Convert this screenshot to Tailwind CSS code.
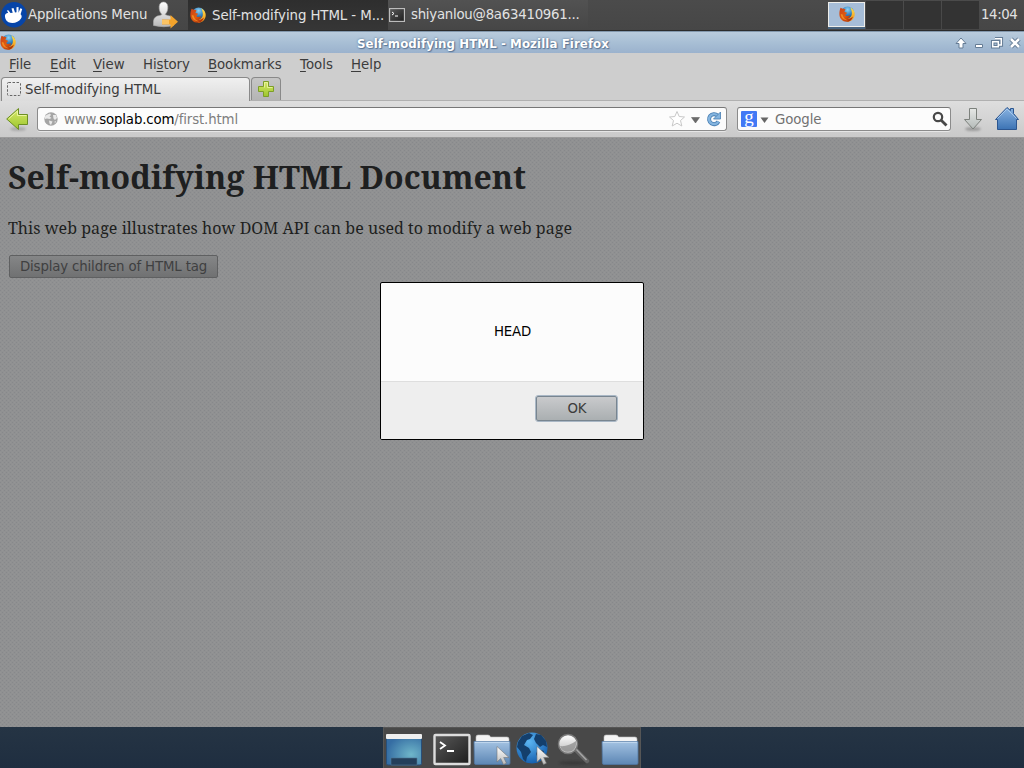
<!DOCTYPE html>
<html lang="en">
<head>
<meta charset="utf-8">
<title>Self-modifying HTML</title>
<script src="https://cdn.jsdelivr.net/npm/@tailwindcss/browser@4"></script>
</head>
<body class="w-[1024px] h-[768px] overflow-hidden flex flex-col bg-[#8f9091] font-['DejaVu_Sans',sans-serif] text-[13.33px] whitespace-nowrap text-[#3c3c3c]">
<svg class="absolute w-0 h-0">
  <defs>
    <linearGradient id="fo" x1="0" y1="0" x2="1" y2="1"><stop offset="0" stop-color="#c9421a"/><stop offset=".5" stop-color="#e05a10"/><stop offset="1" stop-color="#8e200c"/></linearGradient>
    <linearGradient id="fy" x1="0" y1="0" x2="0" y2="1"><stop offset="0" stop-color="#ffe34d"/><stop offset="1" stop-color="#f08a12"/></linearGradient>
    <radialGradient id="fb" cx=".5" cy=".25" r=".8"><stop offset="0" stop-color="#8fd4f5"/><stop offset=".5" stop-color="#2f7fc0"/><stop offset="1" stop-color="#0e2a63"/></radialGradient>
    <linearGradient id="gr" x1="0" y1="0" x2="0" y2="1"><stop offset="0" stop-color="#d8ea6a"/><stop offset="1" stop-color="#9cc52c"/></linearGradient>
    <linearGradient id="bl" x1="0" y1="0" x2="0" y2="1"><stop offset="0" stop-color="#8ab4e2"/><stop offset="1" stop-color="#3c73b4"/></linearGradient>
    <linearGradient id="fold" x1="0" y1="0" x2="0" y2="1"><stop offset="0" stop-color="#a3c2e2"/><stop offset="1" stop-color="#5c86b4"/></linearGradient>
    <linearGradient id="wh" x1="0" y1="0" x2="0" y2="1"><stop offset="0" stop-color="#ffffff"/><stop offset="1" stop-color="#b9b9b9"/></linearGradient>
    <linearGradient id="dn" x1="0" y1="0" x2="0" y2="1"><stop offset="0" stop-color="#e6e8e6"/><stop offset="1" stop-color="#b4bab8"/></linearGradient>
    <linearGradient id="dk" x1="0" y1="0" x2="1" y2="1"><stop offset="0" stop-color="#5a5a5a"/><stop offset="1" stop-color="#1d1d1d"/></linearGradient>
    <radialGradient id="desk" cx=".7" cy=".65" r=".7"><stop offset="0" stop-color="#6fb6c9"/><stop offset="1" stop-color="#356da3"/></radialGradient>
    <radialGradient id="glb" cx=".4" cy=".3" r=".7"><stop offset="0" stop-color="#5cb6f2"/><stop offset="1" stop-color="#1761b0"/></radialGradient>
    <symbol id="firefox" viewBox="0 0 16 16">
      <circle cx="8.600" cy="7" r="6.600" fill="url(#fb)"/>
      <path d="M11 1.200C15 3 16 6.500 15.700 9C15 13 12 15.800 8 15.800L8 12.500C11 12.500 13.200 10 12.800 6.500C12.600 4.200 12 2.500 11 1.200z" fill="url(#fy)"/>
      <path d="M1.500 1.800C2.300 2.300 3 2.600 3.800 2.700C5 2.600 6 3 6.500 3.700L5.300 5.600C6 6.500 7.200 6.300 8 6.800C7.800 7.900 6.500 8.100 6.300 9C7.300 10.600 9.600 9.800 11 9.300C10.600 11.500 9.500 12.300 8.500 12.500C10.500 13 12.500 12 14 10.500C13 14 10.500 15.900 7.500 15.800C3.500 15.600 .5 12.500 .4 8.500C.3 6 .7 4 1.500 1.800z" fill="url(#fo)"/>
      <path d="M1.800 8C2 12 5 14.500 9 14.300C6 13.500 4 11.500 3.600 8.600z" fill="#f08a22"/>
    </symbol>
    <symbol id="cursor" viewBox="0 0 14 20"><path d="M1 1V16.500L4.700 13L7.500 19L10.400 17.700L7.700 12H13z" fill="url(#wh)" stroke="#777" stroke-width=".6"/></symbol>
    <symbol id="folder" viewBox="0 0 38 32">
      <path d="M3 9V3Q3 1 5 1H15Q17 1 17.500 3H34Q36 3 36 5V12H3z" fill="#f4f4f4" stroke="#bdbdbd" stroke-width=".6"/>
      <path d="M1 7.500H37V29Q37 30.500 35.500 30.500H3Q1.500 30.500 1.400 29z" fill="url(#fold)" stroke="#4f76a2" stroke-width=".8"/>
      <path d="M2 8.300H36" stroke="#c6dbf0"/>
    </symbol>
    <pattern id="weave" width="4" height="4" patternUnits="userSpaceOnUse"><path d="M0 0h1v1H0zM2 2h1v1H2z" fill="#87888b"/><path d="M2 0h1v1H2zM0 2h1v1H0z" fill="#949495"/></pattern>
    <filter id="soft" x="-20%" y="-50%" width="140%" height="200%"><feGaussianBlur stdDeviation="1.2"/></filter>
  </defs>
</svg>

<!-- Desktop panel -->
<header class="h-[31px] shrink-0 flex bg-linear-to-b from-[#4b4b4b] to-[#464646] border-b border-[#2b2b2b] text-[#e2e2e2] leading-[29px]">
  <div class="w-[188px] flex">
    <svg class="w-[28px] h-[30px] shrink-0" viewBox="0 0 28 30"><circle cx="14" cy="14.700" r="12.800" fill="#0745a8"/><path d="M5 17C4.500 14.500 6 13 8.200 12.800L6.800 10.500L8.300 10.300L10.500 13L12.700 12.800L11.500 8.500L13.500 8L15 12.500L16.500 12.300V7.300L18.500 7L18.600 12.700L20.300 8.200L22.200 8.900L20.600 14.200C21.500 15 22.300 16.500 21 18.500C18.500 22.500 13 24 8.500 22.200C6.500 21.300 5.500 19.500 5 17z" fill="#fff"/></svg>
    <span class="w-[121px] tracking-[-0.18px]">Applications Menu</span>
    <svg class="ml-[3px] w-[28px] h-[30px]" viewBox="0 0 28 30"><path d="M1.500 25.500V21Q2 16 8 15.500L10 14.500C7.800 12.500 7 9.500 7.200 6.500C7.500 3.500 9 2 11.500 2S15.500 3.500 15.800 6.500C16 9.500 15.200 12.500 13 14.500L15.500 15.500Q21 16 21.500 21V25.500Q12 28 1.500 25.500z" fill="url(#wh)" stroke="#aaa" stroke-width=".6"/><path d="M10 19.500H18.500V15L26 21.800L18.500 28.500V24.500H10z" fill="#f3a32b"/><path d="M10 20H17V24H10z" fill="#ffd98a" opacity=".6"/></svg>
  </div>
  <div class="w-[200px] bg-linear-to-b from-[#2e2e2e] to-[#363636] flex">
    <svg class="ml-[2px] mt-[7px] w-4 h-4 shrink-0"><use href="#firefox"/></svg>
    <span class="ml-[6px] leading-[31px] tracking-[-0.08px]">Self-modifying HTML - M...</span>
  </div>
  <div class="w-[200px] bg-linear-to-b from-[#525252] to-[#464646] flex">
    <svg class="ml-px mt-[8px] w-4 h-[14px] shrink-0" viewBox="0 0 16 14"><rect x=".5" y=".5" width="15" height="13" fill="url(#dk)" stroke="#bcbcbc" stroke-width="1.300"/><path d="M3 4L5 5.500L3 7M6 8H9" stroke="#fff" fill="none"/></svg>
    <span class="ml-[6px] tracking-[-0.26px]">shiyanlou@8a63410961...</span>
  </div>
  <div class="ml-auto w-[196px] flex pt-px">
    <div class="w-[38px] h-[28px] bg-[#4a4a4a] pr-px"><div class="mt-px h-[27px] bg-[#49647f] pb-[2px]"><div class="h-[25px] border border-[#eeeeea] bg-[#a6bdd7] flex justify-center"><svg class="w-4 h-4 mt-[3px]"><use href="#firefox"/></svg></div></div></div>
    <div class="w-[37px] h-[28px] bg-[#333]"></div>
    <div class="w-[37px] h-[28px] ml-px bg-[#333]"></div>
    <div class="w-[37px] h-[28px] ml-px bg-[#333]"></div>
    <span class="ml-[2px] leading-[27px] tracking-[-0.4px]">14:04</span>
  </div>
</header>

<!-- Window title bar -->
<div class="h-[22px] shrink-0 flex bg-linear-to-b from-[#b9cbdc] via-[#a8bfd5] to-[#9bb2cd] border-t border-[#8398ad]">
  <svg class="w-4 h-4 mt-[2px]"><use href="#firefox"/></svg>
  <div class="ml-[341px] w-[254px] text-white font-bold text-[11.8px] tracking-[0.08px] leading-[24px] [text-shadow:0_0_2px_#4f6b88,1px_1px_1px_#60799a]">Self-modifying HTML - Mozilla Firefox</div>
  <svg class="ml-auto w-[74px] h-[21px]" viewBox="950 32 74 21"><g fill="#fff" stroke="#657c95" stroke-width="1" stroke-linejoin="round"><path d="M961 38L966 43.500H963V48H959V43.500H956z"/><rect x="975.500" y="44.500" width="7" height="3"/></g><g fill="none" stroke="#657c95" stroke-width="3.500"><path d="M995 38.700H1001.300V45H999"/><path d="M992.700 41.700H998.300V46.800H992.700z"/><path d="M1011 39L1019 47M1019 39L1011 47" stroke-width="4.500"/></g><g fill="none" stroke="#fff" stroke-width="1.500"><path d="M995 38.700H1001.300V45H999"/><path d="M992.700 41.700H998.300V46.800H992.700z"/><path d="M1011 39L1019 47M1019 39L1011 47" stroke-width="2.500"/></g></svg>
</div>

<!-- Menu bar -->
<nav class="h-[24px] shrink-0 bg-[#cecece] flex pl-[9px] leading-[23px] [&_u]:underline-offset-2">
  <span class="w-[41px]"><u>F</u>ile</span><span class="w-[43px]"><u>E</u>dit</span><span class="w-[50px]"><u>V</u>iew</span><span class="w-[65px] tracking-[-0.1px]">Hi<u>s</u>tory</span><span class="w-[92px] tracking-[-0.1px]"><u>B</u>ookmarks</span><span class="w-[51px]"><u>T</u>ools</span><span><u>H</u>elp</span>
</nav>

<!-- Tabs -->
<div class="h-[24px] shrink-0 bg-[#cecece] flex">
  <div class="ml-px w-[249px] h-[24px] rounded-t-[4px] border border-b-0 border-[#898989] bg-linear-to-b from-[#f0f0f0] to-[#dcdcdc] flex">
    <svg class="ml-[5px] mt-[4px] w-[14px] h-[14px]"><rect x=".5" y=".5" width="13" height="13" rx="1" fill="none" stroke="#666" stroke-dasharray="2.500 1.500"/></svg>
    <span class="ml-[4px] leading-[23px] tracking-[-0.06px]">Self-modifying HTML</span>
  </div>
  <div class="flex-1 border-b border-[#b0b0b0]">
    <div class="ml-px w-[30px] h-[23px] rounded-t-[4px] border border-b-0 border-[#898989] bg-linear-to-b from-[#c6c6c6] to-[#b4b4b4]">
      <svg class="ml-[6px] mt-[3px] w-4 h-4" viewBox="0 0 16 16"><path d="M5.500 .5H10.500V5.500H15.500V10.500H10.500V15.500H5.500V10.500H.5V5.500H5.500z" fill="url(#gr)" stroke="#7d9e28"/><path d="M6.500 6.500V1.500H9.500V6.500H14.500" fill="none" stroke="#eef5a8" stroke-width=".8"/></svg>
    </div>
  </div>
</div>

<!-- Navigation toolbar -->
<div class="h-[37px] shrink-0 bg-linear-to-b from-[#dedede] to-[#cacaca] border-b border-[#9c9c9c] flex pt-[6px]">
  <svg class="w-[24px] h-[26px] ml-[6px]" viewBox="6 107 24 26"><ellipse cx="18" cy="129" rx="8" ry="2" fill="#888" opacity=".5" filter="url(#soft)"/><path d="M6.700 119L18.500 108.500V114.500H27.500V124.500H18.500V129.500z" fill="url(#gr)" stroke="#6d8f23" stroke-linejoin="round"/><path d="M8.500 119L17.500 111V115.500H26.500" fill="none" stroke="#eaf5a0"/></svg>
  <div class="ml-[7px] w-[690px] h-[24px] rounded-[3px] border border-[#8b8b8b] border-t-[#777] bg-[#fcfcfc] flex shadow-[0_1px_0_#e6e6e6] text-[#7e7e7e]">
    <svg class="ml-[6px] mt-[4px] w-[14px] h-[14px] shrink-0" viewBox="0 0 14 14"><circle cx="7" cy="7" r="6.700" fill="#a5a5a5"/><path d="M2.500 3L6 1.500L7 3L5.500 4.500L7.500 6L5.500 7L3 6.500L1 7V4.500zM9 3L12 3L13 6L11 8L9.500 6.500zM5 8.500L8.500 9.500L7 13L5.500 11.500zM10.500 9.500L12 9L11 11.500z" fill="#e9e9e9"/></svg>
    <span class="ml-[6px] leading-[23px] tracking-[-0.14px]">www.<span class="text-black">soplab.com</span>/first.html</span>
    <svg class="ml-auto w-[62px] h-[22px]" viewBox="664 108 62 22"><path d="M677 111.500L679.200 116.500L684.500 117L680.500 120.500L681.800 126L677 123.200L672.200 126L673.500 120.500L669.500 117L674.800 116.500z" fill="#fff" stroke="#c8c8c8"/><path d="M691.500 117.500H699.500L695.500 123z" fill="#6a6a6a" stroke="#555" stroke-width=".5"/><path d="M718.500 121.500A5 5 0 1 1 717.500 115.500" fill="none" stroke="#477db1" stroke-width="4"/><path d="M718.500 121.500A5 5 0 1 1 717.500 115.500" fill="none" stroke="#83b4df" stroke-width="2.400"/><path d="M720.500 112V119H713.500z" fill="#83b4df" stroke="#477db1" stroke-width=".8"/></svg>
  </div>
  <div class="ml-[10px] w-[214px] h-[24px] rounded-[3px] border border-[#8b8b8b] border-t-[#777] bg-[#fcfcfc] flex shadow-[0_1px_0_#e6e6e6] text-[#727272]">
    <div class="ml-[3px] mt-[3px] w-4 h-4 rounded-[1px] bg-[#4279f5] text-white text-center font-['Liberation_Serif',serif] text-[19px] leading-[11px]">g</div>
    <svg class="ml-[3px] mt-[9px] w-[9px] h-[6px]"><path d="M.5 .5H8.500L4.500 6z" fill="#666"/></svg>
    <span class="ml-[6px] leading-[23px] tracking-[-0.1px]">Google</span>
    <svg class="ml-auto mr-[2px] mt-[3px] w-4 h-4"><circle cx="6" cy="6" r="4.200" fill="none" stroke="#484848" stroke-width="2.200"/><path d="M9.200 9.200L14.500 14.500" stroke="#484848" stroke-width="2.800"/></svg>
  </div>
  <svg class="ml-auto w-[62px] h-[26px]" viewBox="962 107 62 26"><ellipse cx="973" cy="129" rx="8" ry="2" fill="#888" opacity=".7" filter="url(#soft)"/><path d="M969.500 108.500H976.500V119.500H981.500L973 129L964.500 119.500H969.500z" fill="url(#dn)" stroke="#7c817c"/><path d="M1007 107.500L1010.500 110.500V108.500H1013.500V113.500L1018.500 119.500H1016.500V129.500H997.500V119.500H995.500z" fill="url(#bl)" stroke="#2c5690"/><path d="M997.500 118.500L1007 109L1016.500 118.500" fill="none" stroke="#b2d0f0" stroke-width=".8"/></svg>
</div>

<!-- Page, dimmed behind the alert -->
<main class="relative h-[589px] shrink-0 bg-[#909192] font-['Noto_Serif','DejaVu_Serif',serif] text-[#1e1f20] pl-[8px]">
  <svg class="absolute inset-0 w-full h-full"><rect width="1024" height="589" fill="url(#weave)"/></svg>
  <div class="relative">
    <h1 class="pt-[17px] h-[78px] leading-[44px] text-[32px] font-bold">Self-modifying HTML Document</h1>
    <p class="h-[39px] leading-[24px] text-[16px] tracking-[0.05px]">This web page illustrates how DOM API can be used to modify a web page</p>
    <button class="block ml-px w-[209px] h-[23px] rounded-[2px] border border-[#5f6061] bg-linear-to-b from-[#858687] to-[#707172] font-['DejaVu_Sans',sans-serif] text-[13.33px] leading-[21px] tracking-[-0.15px] text-[#3f4041]">Display children of HTML tag</button>
  </div>
  <section class="absolute left-[380px] top-[144px] w-[264px] h-[158px] rounded-[2px] border border-black bg-[#fcfcfc] font-['DejaVu_Sans',sans-serif] flex flex-col overflow-hidden">
    <div class="h-[98px] pl-px text-black text-center leading-[97px] tracking-[-0.2px]">HEAD</div>
    <div class="flex-1 bg-[#eee] border-t border-[#dedede] flex justify-end pt-[13px] pr-[25px]">
      <button class="w-[83px] h-[27px] rounded-[3px] border border-[#a9b7c5] p-0 flex"><span class="flex-1 h-[25px] rounded-[2px] border border-[#788590] bg-linear-to-b from-[#c9cacc] to-[#aaafb1] pl-px leading-[23px] text-[#3c3c3c]">OK</span></button>
    </div>
  </section>
</main>

<!-- Dock -->
<footer class="h-[41px] shrink-0 bg-linear-to-b from-[#253444] to-[#1f2e40] flex justify-center">
  <div class="w-[258px] h-[41px] bg-[#484848] border-t border-x border-[#565656]">
    <svg class="w-[256px] h-[40px]" viewBox="384 728 256 40">
      <rect x="386.500" y="735" width="35" height="30" rx="1.500" fill="url(#desk)" stroke="#284f79"/><rect x="386" y="734" width="36" height="5" rx="1" fill="#efefef"/><path d="M391 765V758H417V765z" fill="#243f5b" stroke="#4e7594" stroke-width=".6"/>
      <rect x="434.500" y="735" width="35" height="29" rx="1" fill="url(#dk)" stroke="#ddd" stroke-width="2.400"/><path d="M440 742L445 745.500L440 749M447 751H454" stroke="#fff" stroke-width="1.800" fill="none"/>
      <use href="#folder" x="473" y="734" width="38" height="32"/><use href="#cursor" x="496" y="745" width="14" height="21"/>
      <circle cx="532" cy="748" r="15.500" fill="url(#glb)"/><path d="M518 742L522 736L529 733L533 735L530 739L527 740L524 745L529 748L531 752L527 757L526 762L523 759L521 752L517 747zM536 734L541 735L546 741L547 747L543 745L540 747L536 743L534 739zM538 749L544 751L542 757L539 760L536 754z" fill="#143f6c"/><use href="#cursor" x="536" y="745" width="14" height="21"/>
      <ellipse cx="573" cy="763" rx="14" ry="2" fill="#2e2e2e" opacity=".5" filter="url(#soft)"/><path d="M575 749L587 761" stroke="#666" stroke-width="4.500" stroke-linecap="round"/><path d="M575 748L586.500 760" stroke="#a5a5a5" stroke-width="1.500"/><circle cx="568" cy="744" r="9.500" fill="url(#wh)" stroke="#777" stroke-width="1.500"/><path d="M560 746Q568 747 576 741Q577 748 572 751Q563 754 560 746z" fill="#888" opacity=".7"/>
      <use href="#folder" x="601" y="734" width="38" height="32"/>
    </svg>
  </div>
</footer>
</body>
</html>
